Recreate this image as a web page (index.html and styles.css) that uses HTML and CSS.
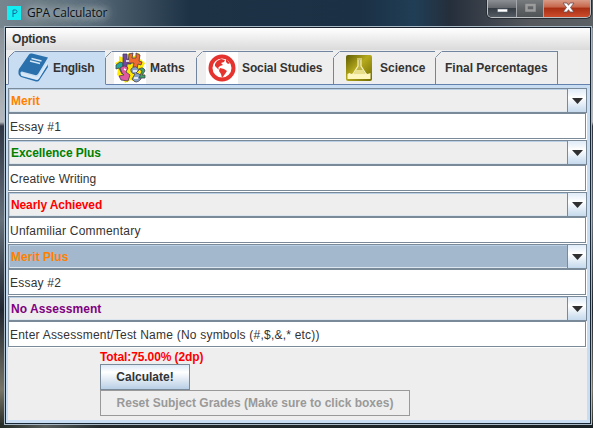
FILE: index.html
```html
<!DOCTYPE html>
<html lang="en">
<head>
<meta charset="utf-8">
<title>GPA Calculator</title>
<link rel="stylesheet" href="styles.css">
</head>
<body>
<div class="window">
  <header class="titlebar">
    <svg class="app-icon" width="14" height="14" viewBox="0 0 14 14"><rect width="14" height="14" fill="#12eef2"/><path d="M6 11V4h2.500q1.500 0 1.500 1.500T8 7.500H6" fill="none" stroke="#176b9c" stroke-width="1"/></svg>
    <h1 class="title">GPA Calculator</h1>
    <div class="controls">
      <span class="control minimize"><svg width="28" height="17"><rect x="9.500" y="9" width="10" height="3" fill="#fff" stroke="#596474" stroke-width=".6"/></svg></span>
      <span class="control maximize"><svg width="26" height="17"><rect x="9.500" y="5" width="8" height="5.500" fill="none" stroke="#9c9c9c" stroke-width="2.500"/></svg></span>
      <span class="control close"><svg width="48" height="17"><path d="M19 3h4l1.500 2.300L26 3h4l-3.500 4.500L30 12h-4l-1.500-2.300L23 12h-4l3.500-4.500z" fill="#fff" stroke="#6b4a50" stroke-width=".8"/></svg></span>
    </div>
  </header>
  <main class="client">
    <nav class="menubar">Options</nav>
    <div class="tabs">
      <div class="tab english selected"><svg class="tab-edge" width="7" height="7"><path d="M0 0h7L0 7z" fill="#eee"/><path d="M.5 6.500l6-6" stroke="#7184a0"/></svg>
        <svg class="icon" width="32" height="32" viewBox="0 0 32 32"><path d="M12 2.500Q13 1 15 1.500L31 5.500 21 22q-1 1.500-3 1L5 19.500q-2 0-1.500 2.500l1 2 15 4q1.500 0 2.500-1.500L30.500 12l.5 3-8.500 13q-1 2-3.500 1.500L4 25Q0 22 2 17z" fill="#2a70ad"/><path d="M14.500 6.500l10 2.500M13 9l10 2.500" stroke="#d3e7f7" stroke-width="1.500"/><path d="M4 20.500l15.500 4.500q1 0 2-1.500L30.500 10v3L22 26.500q-1 1.500-2.500 1L4.500 23.500z" fill="#d9e9f7"/></svg>
        <span>English</span></div>
      <div class="tab maths"><svg class="tab-edge" width="7" height="7"><path d="M.5 6.500l6-6" stroke="#8495a7"/></svg>
        <svg class="icon" width="32" height="32" viewBox="0 0 32 32"><rect width="32" height="32" fill="#fff"/><path d="M5 4l5 2 5-5 5 3 5-3 1 6 5 4-3 6 3 7-6 1-3 5-5-2-6 3-2-5-6-3 1-6-3-6 4-2z" fill="#ffe900"/><g stroke="#453f53" stroke-width=".8"><path d="M2 13l4-3 3 1v5l3 5-4 1-3-6-3 1z" fill="#22a997"/><path d="M9 2h4v5l4 1v4h-4v5l-4-1z" fill="#72499f"/><path d="M15 2l4-1-1 5h4V1l4 2-1 6 3 1-1 3-3-1-1 5-4-2 1-4h-6z" fill="#ef6c30"/><path d="M6 16q5-4 8 0l-2 4 4 3-2 6-7-1-2-4 5-1-2-2z" fill="#de599d"/><path d="M17 17q5-5 8 1l-3 3q6 1 5 6-5 6-9 0l3-5q-5-1-4-5z" fill="#87a1c2"/><path d="M25 17q5-3 6 2l-3 4h3v3h-6l3-7z" fill="#3ba462"/></g><path d="M19 19h4m-3 7h4M10 17l2 1M12 9h3" stroke="#fff" stroke-width="1.500"/></svg>
        <span>Maths</span></div>
      <div class="tab social"><svg class="tab-edge" width="7" height="7"><path d="M.5 6.500l6-6" stroke="#8495a7"/></svg>
        <svg class="icon" width="32" height="32" viewBox="0 0 32 32"><rect width="32" height="32" fill="#fff"/><circle cx="16" cy="16" r="11.500" fill="#fff" stroke="#e53430" stroke-width="4"/><path d="M9 12l2-3 4-2 4 1-1 2-3 1 2 2-3 1-2 2 2 2-2-1-3-3zM14 16l4 1 3 2-2 3-3 4-1-4-2-3zM20 7l4 4-2 1-2-2z" fill="#e53430"/></svg>
        <span>Social Studies</span></div>
      <div class="tab science"><svg class="tab-edge" width="7" height="7"><path d="M.5 6.500l6-6" stroke="#8495a7"/></svg>
        <svg class="icon" width="32" height="32" viewBox="0 0 32 32"><defs><linearGradient id="olive" x2="1" y2="1"><stop stop-color="#5e5c04"/><stop offset=".45" stop-color="#b5a91c"/><stop offset="1" stop-color="#706900"/></linearGradient></defs><rect x="3" y="3" width="26" height="26" rx="2" fill="url(#olive)"/><path d="M4.500 22l2-1 2 1 3-1 3 1 2-1 3 1 3-1 2 1 3-1v6h-23z" fill="#fff6bd"/><path d="M14 7h5M15 8v6l-5 8h13l-5-8V8" fill="#c5bb59" fill-opacity=".7" stroke="#f5efbc" stroke-width="1.200"/><path d="M13 18h7l2 4H11z" fill="#e9df8a"/></svg>
        <span>Science</span></div>
      <div class="tab final"><svg class="tab-edge" width="7" height="7"><path d="M.5 6.500l6-6" stroke="#8495a7"/></svg><span>Final Percentages</span></div>
    </div>
    <section class="panel">
      <div class="combo merit"><span class="value">Merit</span><span class="arrow"><svg width="11" height="6"><path d="M0 0h11L5.500 6z" fill="#303030"/></svg></span></div>
      <div class="field short">Essay #1</div>
      <div class="combo excellence"><span class="value">Excellence Plus</span><span class="arrow"><svg width="11" height="6"><path d="M0 0h11L5.500 6z" fill="#303030"/></svg></span></div>
      <div class="field creative">Creative Writing</div>
      <div class="combo nearly"><span class="value">Nearly Achieved</span><span class="arrow"><svg width="11" height="6"><path d="M0 0h11L5.500 6z" fill="#303030"/></svg></span></div>
      <div class="field">Unfamiliar Commentary</div>
      <div class="combo merit focused"><span class="value">Merit Plus</span><span class="arrow"><svg width="11" height="6"><path d="M0 0h11L5.500 6z" fill="#303030"/></svg></span></div>
      <div class="field short">Essay #2</div>
      <div class="combo none"><span class="value">No Assessment</span><span class="arrow"><svg width="11" height="6"><path d="M0 0h11L5.500 6z" fill="#303030"/></svg></span></div>
      <div class="field">Enter Assessment/Test Name (No symbols (#,$,&amp;,* etc))</div>
      <div class="actions">
        <div class="total">Total:75.00% (2dp)</div>
        <button class="calculate">Calculate!</button>
        <button class="reset" disabled>Reset Subject Grades (Make sure to click boxes)</button>
      </div>
    </section>
  </main>
</div>
</body>
</html>
```

FILE: styles.css
```css
* { box-sizing: border-box; }
body { margin: 0; overflow: hidden; font: 12px "Liberation Sans", Arial, sans-serif; color: #333; }
svg { display: block; flex: none; }
.window {
  width: 593px; height: 428px; padding: 0 2px 0 5px;
  background:
    linear-gradient(90deg, #77858f 0, #566977 90px, #1d3245 190px, #1b3044 360px, #203e56 415px, #252e3b 450px, #55595e 530px, #5b6064 593px) 0 0 / 593px 28px no-repeat,
    linear-gradient(90deg, #252b25, #555c5a 45px, #252b2d 100px, #182023) 0 423px / 593px 5px no-repeat,
    linear-gradient(#7c858d, #b5b9bd 122px, #303543 126px, #65707b 220px, #202630 310px, #777568 390px, #252923);
}
.titlebar { display: flex; height: 27px; padding: 6px 0 0 2px; }
.app-icon { margin-right: 6px; }
.title { margin: -1px 0 0; height: 16px; font: 12px/16px "Open Sans", sans-serif; color: #0c1219; letter-spacing: -.2px; text-shadow: 0 0 6px #aeb8bd, 0 0 9px #aeb8bd, 0 0 12px #aeb8bd, 0 0 14px #aeb8bd; }
.controls { display: flex; width: 104px; height: 18px; margin: -6px 0 0 auto; border: 1px solid #bec1c4; border-top: 0; border-radius: 0 0 5px 5px; overflow: hidden; box-shadow: 0 0 0 1px #282d33; }
.control { border-right: 1px solid #a3a7ab; background: linear-gradient(#8c9094, #65696e 45%, #343b42 48%, #555b62); }
.maximize { background: linear-gradient(#777b7e, #606466 48%, #505456); }
.close { border-right: 0; background: linear-gradient(#d99b86, #c66449 43%, #a72d12 46%, #cc4c2c); }
.client { width: 586px; height: 397px; border: 1px solid #172632; border-top-color: #18212b; background: #eee; outline: 1px solid #a9b9c5; }
.menubar { height: 22px; padding-left: 6px; background: linear-gradient(#fff, #dadada); font-weight: bold; line-height: 22px; letter-spacing: -.2px; }
.tabs { display: flex; height: 35px; padding: 1px 0 0 2px; background: linear-gradient(#6482ad, #6482ad) bottom / 100% 1px no-repeat; }
.tab { position: relative; display: flex; align-items: center; height: 34px; border-top: 1px solid #7184a0; border-right: 1px solid #7184a0; border-bottom: 1px solid #6482ad; padding-left: 9px; font-weight: bold; white-space: nowrap; }
.tab-edge { position: absolute; left: -1px; top: -1px; background: #eee; }
.tab .icon { margin-right: 4px; }
.english { width: 98px; padding-left: 8px; border-left: 1px solid #7184a0; letter-spacing: -.3px; }
.selected { background: #c8ddf2; border-bottom-color: #c8ddf2; }
.selected .tab-edge { background: #c8ddf2; }
.maths { width: 91px; padding-left: 8px; }
.social { width: 137px; letter-spacing: -.12px; }
.science { width: 102px; }
.science .icon { margin-right: 5px; }
.final { width: 122px; }
.panel { width: 584px; height: 338px; border: 3px solid #c8ddf2; border-left-width: 2px; }
.combo { display: flex; width: 579px; height: 25px; border: 1px solid #7a8a99; background: #eee; box-shadow: inset 1px 1px #b8cfe5, inset 0 -1px #dce6ef; font-weight: bold; line-height: 24px; }
.value { flex: 1; padding-left: 2px; }
.arrow { display: flex; align-items: center; justify-content: center; width: 19px; height: 23px; border-left: 1px solid #7a8a99; background: linear-gradient(#dfebf7, #fff 38%, #c5d9ed); }
.field { width: 578px; height: 26px; margin-bottom: 1px; border: 1px solid #7a8a99; background: #fff; padding-left: 1px; line-height: 26px; box-shadow: 1px 1px #fff; letter-spacing: .22px; white-space: nowrap; }
.creative { letter-spacing: .07px; }
.merit { color: #ff8000; }
.excellence { color: #008000; letter-spacing: -.05px; }
.nearly { color: #f00; letter-spacing: -.12px; }
.none { color: #800080; letter-spacing: .06px; }
.focused { background: #a3b8cc; }
.actions { display: flex; flex-direction: column; align-items: flex-start; padding: 2px 0 0 92px; }
.total { height: 14px; color: #f00; font-weight: bold; line-height: 15px; letter-spacing: -.1px; }
button { display: block; width: 90px; height: 26px; padding: 0; margin: 0; border: 1px solid #7a8a99; border-radius: 0; background: linear-gradient(#dce9f6, #fff 30%, #b8cfe5); color: #333; font: bold 12px "Liberation Sans", sans-serif; white-space: nowrap; }
button.reset { width: 310px; background: #eee; border-color: #999; color: #999; }
```
